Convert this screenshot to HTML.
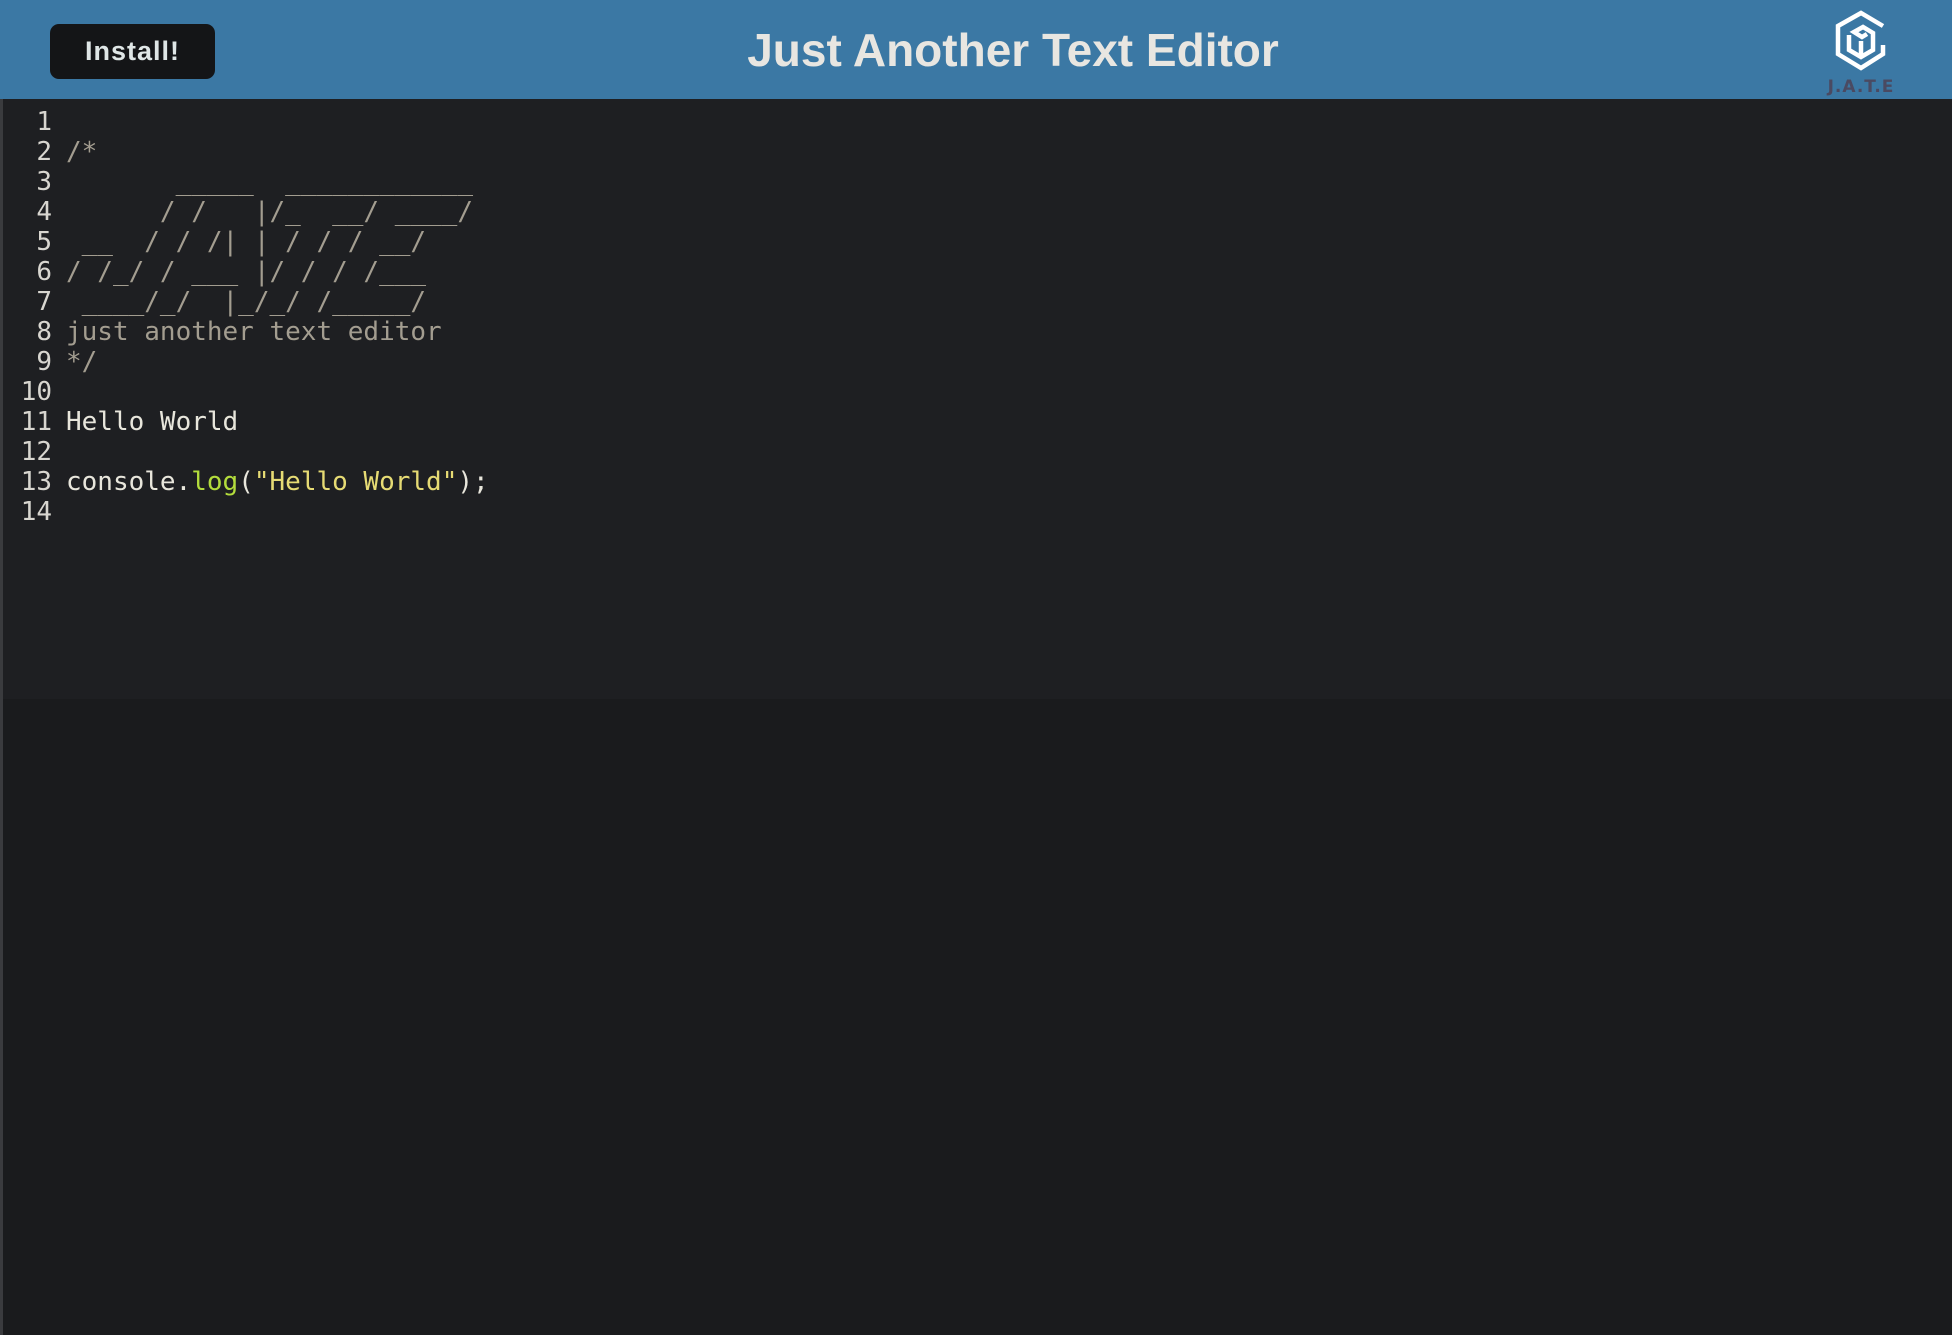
<!DOCTYPE html>
<html><head><meta charset="utf-8"><style>
*{margin:0;padding:0;box-sizing:border-box}
html,body{width:1952px;height:1335px;overflow:hidden;background:#1a1b1d}
.hdr{position:absolute;left:0;top:0;width:1952px;height:99px;background:#3b78a4}
.btn{position:absolute;left:50px;top:24px;width:165px;height:55px;background:#141517;border-radius:9px;color:#dfe6e6;font:bold 27px "Liberation Sans",sans-serif;letter-spacing:1px;text-align:center;line-height:55px}
.title{position:absolute;left:0;width:2026px;top:22px;text-align:center;color:#e8e6e1;font:bold 46px "Liberation Sans",sans-serif;line-height:56px}
.logo{position:absolute;left:1830px;top:10px}
.jate{position:absolute;left:1818px;top:77px;width:86px;text-align:center;color:#4a4a62;font:bold 17px "DejaVu Sans",sans-serif;letter-spacing:1px}
.ed{position:absolute;left:0;top:99px;width:1952px;height:600px;background:#1e1f22;border-left:3px solid #3a3b3e}
.lower{position:absolute;left:0;top:699px;width:1952px;height:636px;border-left:3px solid #3a3b3e}
.gut,.txt{position:absolute;top:107px;font:26px "DejaVu Sans Mono",monospace;line-height:30px;white-space:pre;color:#e8e6dc}
.gut{left:0;width:52px;text-align:right;color:#d8d6d0}
.txt{left:66px}
.c{color:#a39d90}.g{color:#b3dc3c}.s{color:#e6db74}
</style></head><body>
<div class="hdr">
<div class="btn">Install!</div>
<div class="title">Just Another Text Editor</div>
<svg class="logo" width="62" height="62" viewBox="0 0 62 62"><g fill="none" stroke="#fff" stroke-width="4.5" stroke-linejoin="miter">
<path d="M53 16 L31 3 L8 16 L8 44 L31 58 L53 44 L53 35"/>
<path d="M19 25 L19 40 L31 47 L43 40 L43 23 L33 17 L24 22 L32 27 L37 24"/>
<path d="M31 47 L31 31"/></g></svg>
<div class="jate">J.A.T.E</div>
</div>
<div class="ed"></div>
<div class="lower"></div>
<div class="gut"> 1
 2
 3
 4
 5
 6
 7
 8
 9
10
11
12
13
14</div>
<div class="txt">
<span class="c">/*
       _____  ____________
      / /   |/_  __/ ____/
 __  / / /| | / / / __/
/ /_/ / ___ |/ / / /___
 ____/_/  |_/_/ /_____/
just another text editor
*/</span>

Hello World

console.<span class="g">log</span>(<span class="s">"Hello World"</span>);
</div>
</body></html>
